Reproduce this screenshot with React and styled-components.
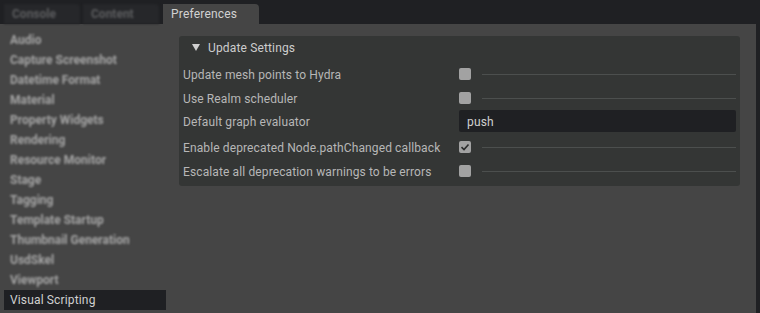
import styled, { createGlobalStyle } from "styled-components";

const pages = [
  "Audio",
  "Capture Screenshot",
  "Datetime Format",
  "Material",
  "Property Widgets",
  "Rendering",
  "Resource Monitor",
  "Stage",
  "Tagging",
  "Template Startup",
  "Thumbnail Generation",
  "UsdSkel",
  "Viewport",
  "Visual Scripting",
];

const settings = [
  { label: "Update mesh points to Hydra", type: "check", value: false },
  { label: "Use Realm scheduler", type: "check", value: false },
  { label: "Default graph evaluator", type: "text", value: "push" },
  { label: "Enable deprecated Node.pathChanged callback", type: "check", value: true },
  { label: "Escalate all deprecation warnings to be errors", type: "check", value: false },
];

export default function App() {
  return (
    <>
      <GlobalStyle />
      <Window>
        <TabBar>
          <Tab>Console</Tab>
          <Tab>Content</Tab>
          <Tab $active>Preferences</Tab>
        </TabBar>
        <Body>
          <Sidebar>
            {pages.map((p) => (
              <NavItem key={p} $selected={p === "Visual Scripting"}>
                {p}
              </NavItem>
            ))}
          </Sidebar>
          <Main>
            <Frame>
              <FrameHeader>
                <Triangle />
                Update Settings
              </FrameHeader>
              {settings.map((s) => (
                <Row key={s.label} $text={s.type === "text"}>
                  <Label>{s.label}</Label>
                  {s.type === "text" ? (
                    <TextField>{s.value}</TextField>
                  ) : (
                    <Value>
                      <Checkbox>
                        {s.value && (
                          <svg width="10" height="10" viewBox="0 0 10 10">
                            <path
                              d="M1.5 5.2 L4 7.5 L8.5 2.5"
                              fill="none"
                              stroke="#2a2b2b"
                              strokeWidth="1.6"
                            />
                          </svg>
                        )}
                      </Checkbox>
                      <Rule />
                    </Value>
                  )}
                </Row>
              ))}
            </Frame>
          </Main>
          <ScrollEdge />
        </Body>
      </Window>
    </>
  );
}

const GlobalStyle = createGlobalStyle`
  body {
    margin: 0;
    background: #454545;
    font-family: Roboto, "Noto Sans", sans-serif;
  }
`;

const Window = styled.div`
  display: flex;
  flex-direction: column;
  height: 313px;
  overflow: hidden;
`;

const TabBar = styled.div`
  display: flex;
  align-items: flex-end;
  gap: 3px;
  height: 24px;
  padding-left: 4px;
  background: #1f2023;
`;

const Tab = styled.div`
  display: flex;
  align-items: center;
  height: 20px;
  padding: 0 8px;
  box-sizing: border-box;
  width: ${({ $active }) => ($active ? "96px" : "76px")};
  margin-left: ${({ $active }) => ($active ? "1px" : "0")};
  border-radius: 0 4px 0 0;
  background: ${({ $active }) => ($active ? "#454545" : "#26272a")};
  color: ${({ $active }) => ($active ? "#d2d2d2" : "#5c5d5f")};
  font-size: 12px;
  letter-spacing: ${({ $active }) => ($active ? "0.2px" : "0")};
  font-weight: ${({ $active }) => ($active ? 400 : 700)};
  filter: ${({ $active }) => ($active ? "none" : "blur(0.8px)")};
`;

const Body = styled.div`
  display: flex;
  flex: 1;
  min-height: 0;
`;

const Sidebar = styled.div`
  width: 166px;
  padding-top: 6px;
  display: flex;
  flex-direction: column;
`;

const NavItem = styled.div`
  height: 20px;
  display: flex;
  align-items: center;
  margin-left: 4px;
  padding-left: 6px;
  font-size: 12px;
  letter-spacing: ${({ $selected }) => ($selected ? "0.15px" : "0")};
  background: ${({ $selected }) => ($selected ? "#1f2023" : "transparent")};
  color: ${({ $selected }) => ($selected ? "#d0d0d0" : "#a6a6a6")};
  font-weight: ${({ $selected }) => ($selected ? 400 : 700)};
  filter: ${({ $selected }) => ($selected ? "none" : "blur(0.9px)")};
`;

const Main = styled.div`
  flex: 1;
  padding: 12px 16px 0 13px;
`;

const ScrollEdge = styled.div`
  width: 4px;
  background: #1f2023;
`;

const Frame = styled.div`
  background: #343635;
  border-radius: 3px;
  padding: 0 4px 3px 4px;
`;

const FrameHeader = styled.div`
  height: 24px;
  display: flex;
  align-items: center;
  padding-left: 9px;
  gap: 8px;
  color: #cdcdcd;
  font-size: 12px;
  letter-spacing: 0.15px;
  margin-bottom: 2px;
`;

const Triangle = styled.span`
  width: 0;
  height: 0;
  border-left: 4px solid transparent;
  border-right: 4px solid transparent;
  border-top: 7px solid #d0d0d0;
  margin-top: -1px;
`;

const Row = styled.div`
  display: flex;
  align-items: center;
  height: ${({ $text }) => ($text ? "22px" : "24px")};
  margin-bottom: ${({ $text }) => ($text ? "3px" : "0")};
`;

const Label = styled.div`
  width: 276px;
  padding-top: 2px;
  color: #b7b7b7;
  font-size: 12px;
  letter-spacing: 0.12px;
`;

const Value = styled.div`
  flex: 1;
  display: flex;
  align-items: center;
`;

const Checkbox = styled.div`
  width: 12px;
  height: 12px;
  border-radius: 2px;
  background: #a2a2a2;
  display: flex;
  align-items: center;
  justify-content: center;
`;

const Rule = styled.div`
  flex: 1;
  height: 1px;
  margin-left: 11px;
  background: #4c4f4e;
`;

const TextField = styled.div`
  flex: 1;
  height: 22px;
  display: flex;
  align-items: center;
  padding: 1px 0 0 8px;
  box-sizing: border-box;
  border-radius: 2px;
  background: #1f2023;
  color: #d0d0d0;
  font-size: 12px;
  letter-spacing: 0.15px;
`;
